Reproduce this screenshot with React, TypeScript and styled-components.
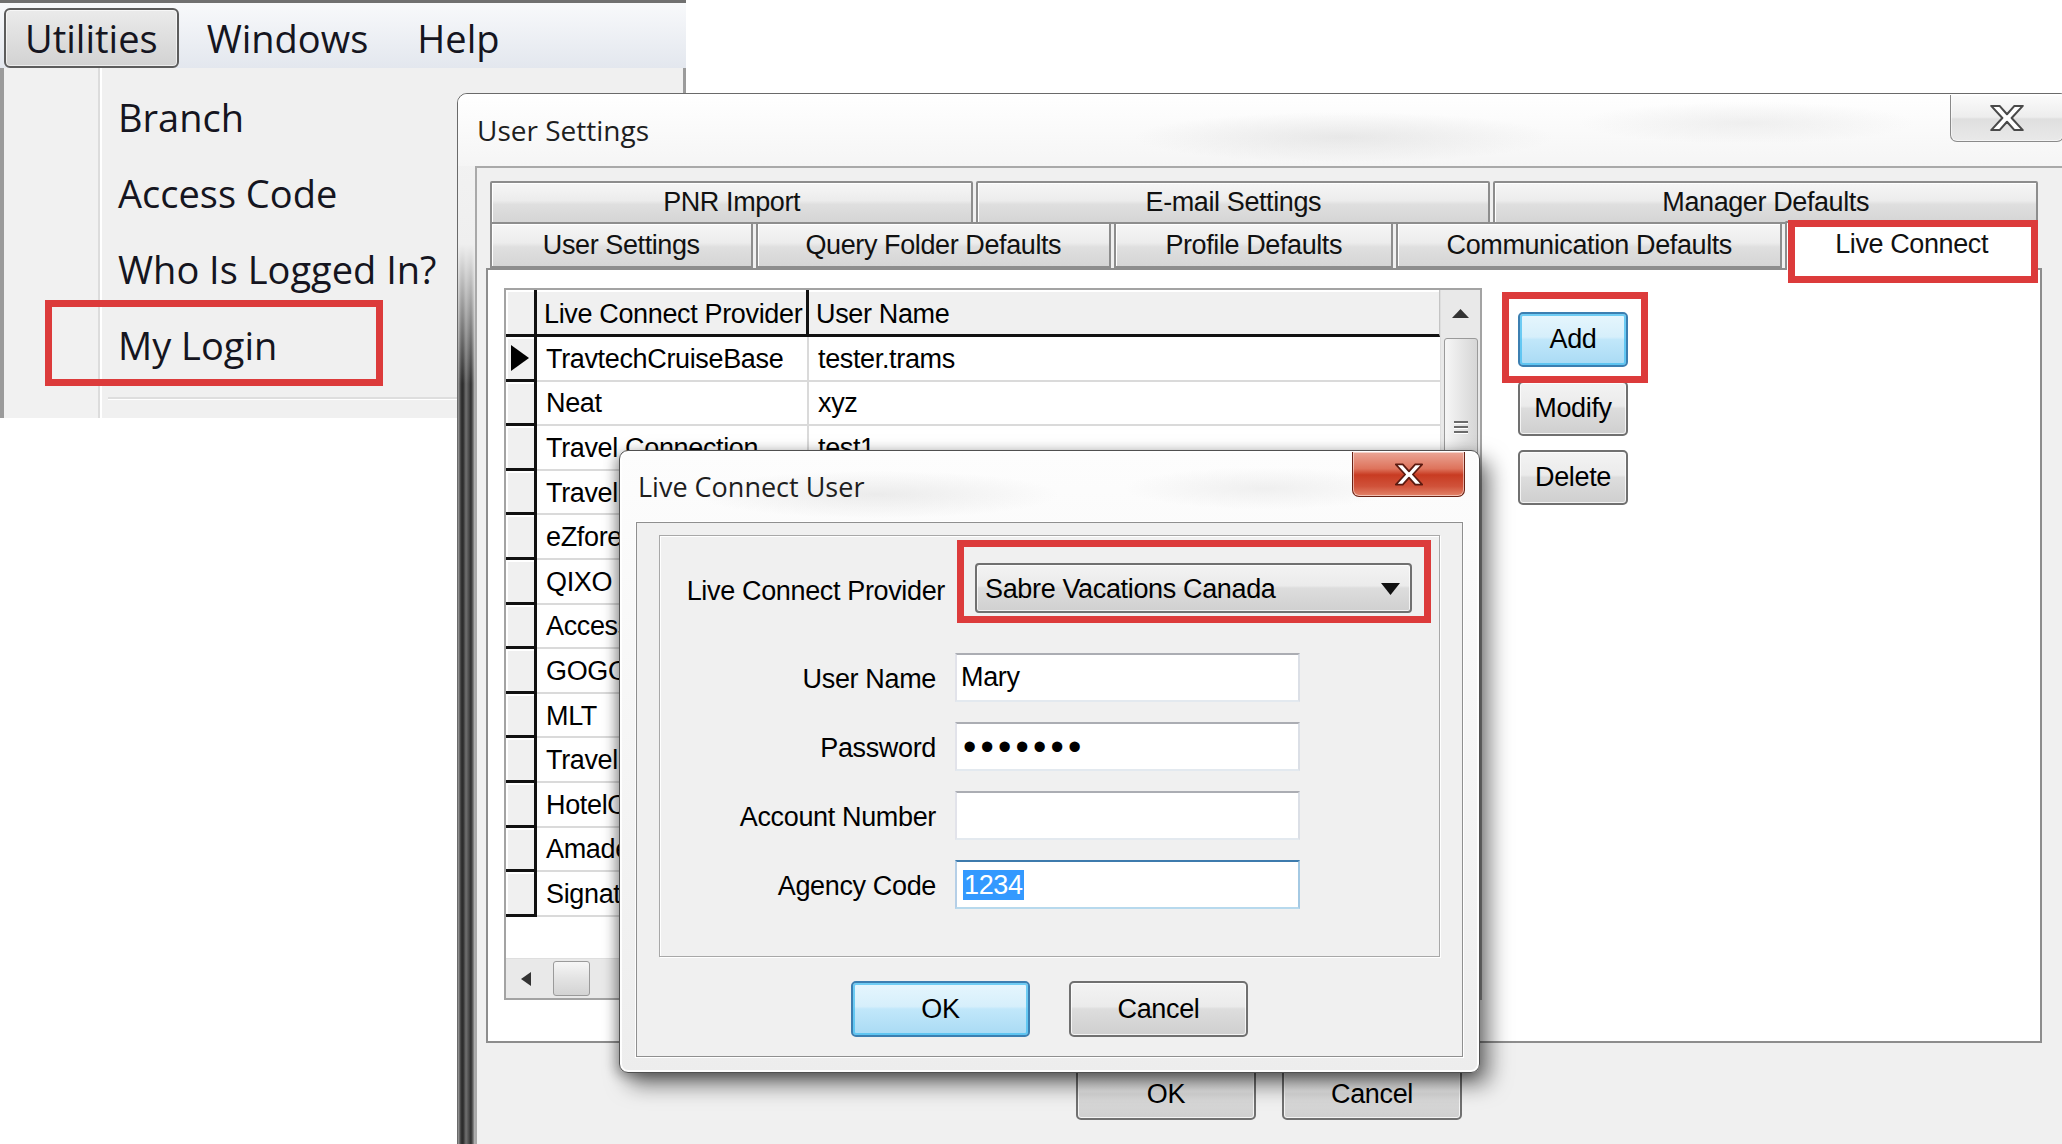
import React from "react";
import styled, { createGlobalStyle } from "styled-components";

const GlobalStyle = createGlobalStyle`
  html, body { margin: 0; padding: 0; background: #ffffff; }
  body { overflow: hidden; }
  *, *::before, *::after { box-sizing: border-box; }
`;

const UI_FONT = `"Liberation Sans", Arial, sans-serif`;
const SHELL_FONT = `"Open Sans", "Noto Sans", sans-serif`;
const RED = "#dc3b3b";

const Desktop = styled.div`
  position: relative;
  width: 2062px;
  height: 1144px;
  overflow: hidden;
  background: #fff;
  font-family: ${UI_FONT};
`;

// red annotation frame laid over the content
const Callout = styled.div<{ $x: number; $y: number; $w: number; $h: number }>`
  position: absolute;
  left: ${(p) => p.$x}px;
  top: ${(p) => p.$y}px;
  width: ${(p) => p.$w}px;
  height: ${(p) => p.$h}px;
  border: 7px solid ${RED};
  pointer-events: none;
  z-index: 5;
`;

/* ---------- menu ---------- */

const MenuWindow = styled.div`
  position: absolute;
  left: 0;
  top: 0;
  width: 686px;
  height: 418px;
  display: flex;
  flex-direction: column;
  font-family: ${SHELL_FONT};
  font-size: 38px;
  color: #151520;
`;

const MenuBar = styled.div`
  height: 68px;
  flex: none;
  border-top: 3px solid #707070;
  background: linear-gradient(#f8f9fb, #e3e7ee);
  display: flex;
  align-items: flex-end;
  gap: 7px;
  padding-left: 4px;
`;

const MenuTitle = styled.div<{ $open?: boolean }>`
  height: 60px;
  padding: 0 19px;
  display: flex;
  align-items: center;
  border-radius: 6px;
  border: 2px solid ${(p) => (p.$open ? "#5c5c5c" : "transparent")};
  background: ${(p) => (p.$open ? "linear-gradient(#ebebeb, #d2d2d2)" : "transparent")};
  box-shadow: ${(p) => (p.$open ? "inset 0 0 0 1px rgba(255,255,255,0.6)" : "none")};
`;

const Dropdown = styled.div`
  position: relative;
  flex: 1;
  display: flex;
  background: #f0f0f0;
  border-left: 4px solid #9b9b9b;
  border-right: 3px solid #9b9b9b;
`;

const Gutter = styled.div`
  width: 96px;
  flex: none;
  background: #f1f1f1;
  border-right: 2px solid #dcdcdc;
  box-shadow: 2px 0 0 #ffffff;
`;

const MenuList = styled.div`
  flex: 1;
  display: flex;
  flex-direction: column;
  padding-top: 11px;
`;

const MenuItem = styled.div`
  height: 76px;
  display: flex;
  align-items: center;
  padding-left: 18px;
  white-space: nowrap;
`;

const MenuSeparator = styled.div`
  height: 2px;
  margin: 14px 0 0 8px;
  background: #dedede;
  box-shadow: 0 1px 0 #ffffff;
`;

/* ---------- window chrome ---------- */

const SettingsWindow = styled.div`
  position: absolute;
  left: 457px;
  top: 93px;
  width: 1613px;
  height: 1120px;
  display: flex;
  flex-direction: column;
  border: 1px solid #6a6a6a;
  border-radius: 10px 10px 0 0;
  overflow: hidden;
  background:
    linear-gradient(to bottom, #f4f4f4 0, #efefef 150px, rgba(239, 239, 239, 0) 290px),
    linear-gradient(to right, #a0a0a0 0, #363636 3px, #2a2a2a 5px, #707070 8px, #575757 10px, #2e2e2e 13px, #6a6a6a 15px, #c4c4c4 17px);
`;

const TitleBar = styled.div<{ $h: number; $pad: number }>`
  height: ${(p) => p.$h}px;
  flex: none;
  display: flex;
  align-items: flex-start;
  padding-left: ${(p) => p.$pad}px;
`;

const SettingsTitleBar = styled(TitleBar)`
  background:
    radial-gradient(ellipse 300px 36px at 55% 60%, rgba(200, 200, 200, 0.35), rgba(255, 255, 255, 0) 70%),
    radial-gradient(ellipse 240px 30px at 80% 40%, rgba(210, 210, 210, 0.3), rgba(255, 255, 255, 0) 70%),
    linear-gradient(#ffffff, #f5f5f5);
`;

const TitleText = styled.div<{ $size: number }>`
  flex: 1;
  align-self: center;
  font-family: ${SHELL_FONT};
  font-size: ${(p) => p.$size}px;
  color: #1e1e1e;
  white-space: nowrap;
`;

const CaptionButton = styled.div<{ $danger?: boolean }>`
  width: ${(p) => (p.$danger ? 113 : 114)}px;
  height: ${(p) => (p.$danger ? 45 : 47)}px;
  margin-top: 1px;
  margin-right: ${(p) => (p.$danger ? -2 : 5)}px;
  display: flex;
  align-items: center;
  justify-content: center;
  border-radius: 0 0 7px 7px;
  border: 1px solid ${(p) => (p.$danger ? "#6b2214" : "#8a8a8a")};
  border-top: none;
  background: ${(p) =>
    p.$danger
      ? "linear-gradient(#eaa696 0%, #de735c 38%, #c83b22 52%, #d0523a 78%, #e3846a 100%)"
      : "linear-gradient(#fbfbfb 0%, #ededed 48%, #dfdfdf 52%, #e9e9e9 100%)"};
  box-shadow: inset 0 0 0 1px rgba(255, 255, 255, 0.5);
`;

const WindowBody = styled.div`
  flex: 1;
  display: flex;
  padding: 0 7px 0 17px;
`;

const Client = styled.div`
  flex: 1;
  display: flex;
  flex-direction: column;
  background: #f0f0f0;
  border-top: 2px solid #a9a9a9;
  border-left: 2px solid #a9a9a9;
  padding: 13px 20px 0 9px;
`;

/* ---------- tabs ---------- */

const TabControl = styled.div`
  position: relative;
  height: 862px;
  flex: none;
  display: flex;
  flex-direction: column;
`;

const TabRow = styled.div<{ $h: number; $overlap?: boolean }>`
  display: flex;
  gap: 3px;
  margin: ${(p) => (p.$overlap ? "-2px 4px 0" : "0 4px")};
  height: ${(p) => p.$h}px;
  align-items: flex-start;
  flex: none;
`;

const Tab = styled.div<{ $grow: number; $active?: boolean }>`
  flex: ${(p) => p.$grow} 1 0;
  height: ${(p) => (p.$active ? "49px" : "100%")};
  margin-top: ${(p) => (p.$active ? "-1px" : "0")};
  position: relative;
  z-index: ${(p) => (p.$active ? 2 : 1)};
  display: flex;
  align-items: center;
  justify-content: center;
  padding-bottom: ${(p) => (p.$active ? "4px" : "0")};
  border: 2px solid #8d8d8d;
  border-bottom: ${(p) => (p.$active ? "none" : "2px solid #8d8d8d")};
  border-radius: 2px 2px 0 0;
  background: ${(p) =>
    p.$active ? "#ffffff" : "linear-gradient(#f6f6f6 0%, #ececec 45%, #dfdfdf 55%, #d5d5d5 100%)"};
  box-shadow: ${(p) => (p.$active ? "none" : "inset 1px 1px 0 #ffffff")};
  font-size: 27px;
  letter-spacing: -0.4px;
  color: #111;
  white-space: nowrap;
`;

const TabPanel = styled.div`
  flex: 1;
  display: flex;
  align-items: flex-start;
  gap: 36px;
  padding: 18px 0 0 16px;
  background: #ffffff;
  border: 2px solid #8d8d8d;
`;

/* ---------- grid ---------- */

const Grid = styled.div`
  width: 978px;
  height: 712px;
  flex: none;
  border: 2px solid #a3a3a3;
  display: grid;
  grid-template-columns: 1fr 40px;
  grid-template-rows: 1fr 40px;
  background: #ffffff;
`;

const Table = styled.div`
  display: grid;
  grid-template-columns: 31px 272px 1fr;
  grid-template-rows: 47px;
  grid-auto-rows: 44.6px;
  align-content: start;
  overflow: hidden;
  font-size: 27px;
  letter-spacing: -0.35px;
  color: #000;
`;

const IndicatorCell = styled.div`
  background: #f0f0f0;
  border-right: 3px solid #111;
  border-bottom: 3px solid #111;
  box-shadow: inset 2px 2px 0 #ffffff;
  display: flex;
  align-items: center;
  justify-content: center;
`;

const HeaderCell = styled.div<{ $last?: boolean }>`
  background: #f0f0f0;
  border-bottom: 3px solid #111;
  border-right: ${(p) => (p.$last ? "1px solid #c4c4c4" : "3px solid #111")};
  box-shadow: inset 0 2px 0 #ffffff;
  display: flex;
  align-items: center;
  padding: 4px 0 0 7px;
  white-space: nowrap;
  overflow: hidden;
`;

const DataCell = styled.div<{ $first?: boolean }>`
  border-bottom: 2px solid #dadada;
  border-right: ${(p) => (p.$first ? "2px solid #dadada" : "none")};
  display: flex;
  align-items: center;
  padding: 2px 0 0 9px;
  white-space: nowrap;
  overflow: hidden;
`;

const VScroll = styled.div`
  background: #e9e9e9;
  border-left: 1px solid #dedede;
  display: flex;
  flex-direction: column;
  align-items: center;
`;

const ArrowBox = styled.div<{ $w?: number; $h?: number }>`
  width: ${(p) => (p.$w ? `${p.$w}px` : "100%")};
  height: ${(p) => (p.$h ? `${p.$h}px` : "100%")};
  flex: none;
  display: flex;
  align-items: center;
  justify-content: center;
`;

const VThumb = styled.div`
  width: 34px;
  height: 178px;
  margin-top: 1px;
  border: 1px solid #9a9a9a;
  border-radius: 3px;
  background: linear-gradient(to right, #f6f6f6, #e6e6e6 50%, #d6d6d6);
  display: flex;
  align-items: center;
  justify-content: center;
`;

const HScroll = styled.div`
  background: #e9e9e9;
  border-top: 1px solid #dedede;
  display: flex;
  align-items: center;
`;

const HThumb = styled.div`
  width: 37px;
  height: 35px;
  margin-left: 7px;
  border: 1px solid #9a9a9a;
  border-radius: 3px;
  background: linear-gradient(#f6f6f6, #e3e3e3 50%, #d3d3d3);
`;

const ScrollCorner = styled.div`
  background: #f0f0f0;
`;

/* ---------- buttons ---------- */

const SideButtons = styled.div`
  position: relative;
  margin-top: 24px;
  display: flex;
  flex-direction: column;
  gap: 14px;
`;

const WinButton = styled.div<{ $w: number; $h: number; $default?: boolean }>`
  width: ${(p) => p.$w}px;
  height: ${(p) => p.$h}px;
  flex: none;
  display: flex;
  align-items: center;
  justify-content: center;
  font-size: 27px;
  letter-spacing: -0.35px;
  color: #000;
  border-radius: 5px;
  border: 2px solid ${(p) => (p.$default ? "#3c7fb1" : "#707070")};
  background: ${(p) =>
    p.$default
      ? "linear-gradient(#e6f6fd 0%, #d6effb 45%, #c1e7fa 50%, #a9daf4 100%)"
      : "linear-gradient(#f3f3f3 0%, #ebebeb 45%, #dddddd 50%, #cfcfcf 100%)"};
  box-shadow: ${(p) =>
    p.$default
      ? "inset 0 0 0 2px rgba(70, 190, 240, 0.75)"
      : "inset 0 0 0 1px rgba(255, 255, 255, 0.75)"};
`;

const FooterRow = styled.div`
  display: flex;
  justify-content: center;
  gap: 26px;
  margin-top: 25px;
  padding-left: 10px;
`;

/* ---------- Live Connect User dialog ---------- */

const Dialog = styled.div`
  position: absolute;
  left: 619px;
  top: 450px;
  width: 861px;
  height: 623px;
  z-index: 10;
  display: flex;
  flex-direction: column;
  padding: 0 16px 15px 16px;
  border: 1px solid #505050;
  border-radius: 9px;
  background:
    radial-gradient(ellipse 260px 34px at 30% 7%, rgba(205, 205, 205, 0.35), rgba(255, 255, 255, 0) 70%),
    radial-gradient(ellipse 200px 30px at 75% 6%, rgba(210, 210, 210, 0.3), rgba(255, 255, 255, 0) 70%),
    linear-gradient(#fdfdfd, #f2f2f2 70%, #ededed);
  box-shadow:
    inset 0 0 0 2px rgba(255, 255, 255, 0.9),
    9px 11px 22px rgba(0, 0, 0, 0.55),
    -4px 3px 12px rgba(0, 0, 0, 0.3);
`;

const DialogClient = styled.div`
  flex: 1;
  display: flex;
  flex-direction: column;
  background: #f0f0f0;
  border: 1px solid #8f8f8f;
  box-shadow: 0 0 0 1px #ffffff;
  padding: 12px 22px 0 22px;
`;

const GroupBox = styled.div`
  height: 422px;
  flex: none;
  display: grid;
  grid-template-columns: 276px 1fr;
  column-gap: 19px;
  row-gap: 20px;
  align-content: start;
  align-items: center;
  padding-top: 4px;
  border: 1px solid #a8a8a8;
  box-shadow: inset 1px 1px 0 #ffffff, 1px 1px 0 #ffffff;
`;

const FieldLabel = styled.div<{ $lead?: boolean }>`
  text-align: right;
  white-space: nowrap;
  font-size: 27px;
  letter-spacing: -0.35px;
  color: #000;
  margin-top: ${(p) => (p.$lead ? "9px" : "3px")};
  margin-right: ${(p) => (p.$lead ? "-9px" : "0")};
`;

const ProviderFrame = styled.div`
  width: 474px;
  margin-left: 2px;
  margin-bottom: 10px;
  border: 7px solid ${RED};
  padding: 16px 12px 3px 11px;
`;

const Combo = styled.div`
  height: 50px;
  display: flex;
  align-items: center;
  justify-content: space-between;
  padding: 2px 10px 0 8px;
  border: 2px solid #707070;
  border-radius: 4px;
  background: linear-gradient(#f3f3f3 0%, #ebebeb 45%, #dddddd 50%, #d0d0d0 100%);
  box-shadow: inset 0 0 0 1px rgba(255, 255, 255, 0.7);
  font-size: 27px;
  letter-spacing: -0.35px;
  color: #000;
`;

const TextBox = styled.div<{ $focus?: boolean }>`
  width: 345px;
  height: 49px;
  display: flex;
  align-items: center;
  padding-left: 4px;
  background: #ffffff;
  border: 2px solid;
  border-color: ${(p) =>
    p.$focus ? "#3d7bad #a4c9e3 #b7d9ed #b5cfe7" : "#abadb3 #dbdfe6 #e3e9ef #e2e3ea"};
  font-size: 27px;
  letter-spacing: -0.35px;
  color: #000;
`;

const Dots = styled.span`
  font-size: 38px;
  line-height: 1;
  letter-spacing: 4.2px;
  padding-left: 2px;
`;

const Selection = styled.span`
  background: #3399ff;
  color: #ffffff;
  line-height: 30px;
  padding: 0 1px;
  margin-left: 2px;
`;

const DialogButtons = styled.div`
  display: flex;
  justify-content: center;
  gap: 39px;
  margin-top: 24px;
`;

/* ---------- drawings ---------- */

const CloseGlyph = ({ w, h, fill, stroke }: { w: number; h: number; fill: string; stroke: string }) => (
  <svg width={w} height={h} viewBox="0 0 36 28">
    <polygon
      points="1,1 10,1 18,10 26,1 35,1 23,14 35,27 26,27 18,18 10,27 1,27 13,14"
      fill={fill}
      stroke={stroke}
      strokeWidth="2.2"
      strokeLinejoin="round"
    />
  </svg>
);

const RowPointer = () => (
  <svg width="18" height="26" viewBox="0 0 18 26">
    <polygon points="0,0 18,13 0,26" fill="#000" />
  </svg>
);

const UpArrow = () => (
  <svg width="17" height="9" viewBox="0 0 17 9">
    <polygon points="0,9 8.5,0 17,9" fill="#333" />
  </svg>
);

const LeftArrow = () => (
  <svg width="10" height="14" viewBox="0 0 10 14">
    <polygon points="10,0 0,7 10,14" fill="#333" />
  </svg>
);

const DownArrow = () => (
  <svg width="19" height="12" viewBox="0 0 19 12">
    <polygon points="0,0 19,0 9.5,12" fill="#111" />
  </svg>
);

const Grip = () => (
  <svg width="16" height="16" viewBox="0 0 16 16">
    {[2, 7, 12].map((y) => (
      <g key={y}>
        <rect x="1" y={y} width="14" height="2" fill="#6a6a6a" />
        <rect x="1" y={y + 2} width="14" height="1" fill="#ffffff" />
      </g>
    ))}
  </svg>
);

/* ---------- data ---------- */

const menuItems = ["Branch", "Access Code", "Who Is Logged In?", "My Login"];

const tabRows = [
  [
    { label: "PNR Import", w: 485 },
    { label: "E-mail Settings", w: 516 },
    { label: "Manager Defaults", w: 547 },
  ],
  [
    { label: "User Settings", w: 264 },
    { label: "Query Folder Defaults", w: 359 },
    { label: "Profile Defaults", w: 281 },
    { label: "Communication Defaults", w: 390 },
    { label: "Live Connect", w: 254, active: true },
  ],
];

// rows lower down are hidden behind the dialog; only their first letters show
const providers = [
  ["TravtechCruiseBase", "tester.trams"],
  ["Neat", "xyz"],
  ["Travel Connection", "test1"],
  ["Travel", ""],
  ["eZforex", ""],
  ["QIXO", ""],
  ["Access", ""],
  ["GOGO", ""],
  ["MLT", ""],
  ["Travel ", ""],
  ["HotelO", ""],
  ["Amadeus", ""],
  ["Signature", ""],
];

export default function App() {
  return (
    <Desktop>
      <GlobalStyle />

      <MenuWindow>
        <MenuBar>
          <MenuTitle $open>Utilities</MenuTitle>
          <MenuTitle>Windows</MenuTitle>
          <MenuTitle>Help</MenuTitle>
        </MenuBar>
        <Dropdown>
          <Gutter />
          <MenuList>
            {menuItems.map((item) => (
              <MenuItem key={item}>{item}</MenuItem>
            ))}
            <MenuSeparator />
          </MenuList>
          <Callout $x={41} $y={232} $w={338} $h={86} />
        </Dropdown>
      </MenuWindow>

      <SettingsWindow>
        <SettingsTitleBar $h={72} $pad={19}>
          <TitleText $size={28}>User Settings</TitleText>
          <CaptionButton>
            <CloseGlyph w={34} h={26} fill="#ffffff" stroke="#4a4a4a" />
          </CaptionButton>
        </SettingsTitleBar>
        <WindowBody>
          <Client>
            <TabControl>
              {tabRows.map((row, i) => (
                <TabRow key={i} $h={i === 0 ? 43 : 46} $overlap={i > 0}>
                  {row.map((t) => (
                    <Tab key={t.label} $grow={t.w} $active={"active" in t}>
                      {t.label}
                    </Tab>
                  ))}
                </TabRow>
              ))}
              <TabPanel>
                <Grid>
                  <Table>
                    <IndicatorCell />
                    <HeaderCell>Live Connect Provider</HeaderCell>
                    <HeaderCell $last>User Name</HeaderCell>
                    {providers.map(([name, user], i) => (
                      <React.Fragment key={i}>
                        <IndicatorCell>{i === 0 && <RowPointer />}</IndicatorCell>
                        <DataCell $first>{name}</DataCell>
                        <DataCell>{user}</DataCell>
                      </React.Fragment>
                    ))}
                  </Table>
                  <VScroll>
                    <ArrowBox $h={47}>
                      <UpArrow />
                    </ArrowBox>
                    <VThumb>
                      <Grip />
                    </VThumb>
                  </VScroll>
                  <HScroll>
                    <ArrowBox $w={40}>
                      <LeftArrow />
                    </ArrowBox>
                    <HThumb />
                  </HScroll>
                  <ScrollCorner />
                </Grid>
                <SideButtons>
                  <WinButton $w={110} $h={55} $default>
                    Add
                  </WinButton>
                  <WinButton $w={110} $h={55}>
                    Modify
                  </WinButton>
                  <WinButton $w={110} $h={55}>
                    Delete
                  </WinButton>
                  <Callout $x={-16} $y={-20} $w={146} $h={91} />
                </SideButtons>
              </TabPanel>
              <Callout $x={1302} $y={39} $w={250} $h={63} />
            </TabControl>
            <FooterRow>
              <WinButton $w={180} $h={52}>
                OK
              </WinButton>
              <WinButton $w={180} $h={52}>
                Cancel
              </WinButton>
            </FooterRow>
          </Client>
        </WindowBody>
      </SettingsWindow>

      <Dialog>
        <TitleBar $h={71} $pad={2}>
          <TitleText $size={27}>Live Connect User</TitleText>
          <CaptionButton $danger>
            <CloseGlyph w={28} h={23} fill="#ffffff" stroke="#5a1a10" />
          </CaptionButton>
        </TitleBar>
        <DialogClient>
          <GroupBox>
            <FieldLabel $lead>Live Connect Provider</FieldLabel>
            <ProviderFrame>
              <Combo>
                <span>Sabre Vacations Canada</span>
                <DownArrow />
              </Combo>
            </ProviderFrame>

            <FieldLabel>User Name</FieldLabel>
            <TextBox>Mary</TextBox>

            <FieldLabel>Password</FieldLabel>
            <TextBox>
              <Dots>•••••••</Dots>
            </TextBox>

            <FieldLabel>Account Number</FieldLabel>
            <TextBox />

            <FieldLabel>Agency Code</FieldLabel>
            <TextBox $focus>
              <Selection>1234</Selection>
            </TextBox>
          </GroupBox>
          <DialogButtons>
            <WinButton $w={179} $h={56} $default>
              OK
            </WinButton>
            <WinButton $w={179} $h={56}>
              Cancel
            </WinButton>
          </DialogButtons>
        </DialogClient>
      </Dialog>
    </Desktop>
  );
}
